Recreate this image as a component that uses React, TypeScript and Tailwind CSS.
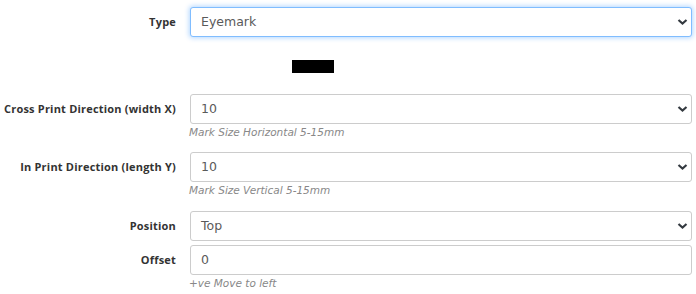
const Chevron = () => (
  <svg
    className="pointer-events-none absolute right-[3px] top-1/2 -translate-y-1/2"
    width="11"
    height="7"
    viewBox="0 0 11 7"
  >
    <path d="M1.5 1.5 L5.5 5 L9.5 1.5" fill="none" stroke="#343a40" strokeWidth="2.2" />
  </svg>
);

type FieldProps = {
  label: string;
  value: string;
  select?: boolean;
  focused?: boolean;
  help?: string;
  className?: string;
};

const Field = ({ label, value, select, focused, help, className }: FieldProps) => (
  <div className={className}>
    <div className="flex items-center">
      <label className="w-[176px] shrink-0 text-right text-[11px] font-bold tracking-[0.2px] text-[#333]">
        {label}
      </label>
      <div
        className={`relative ml-[14px] flex h-[30px] flex-1 items-center rounded-[3px] border bg-white pl-[10px] font-['DejaVu_Sans',sans-serif] text-[12.5px] text-[#5a5a5a] ${
          focused
            ? "border-[#80bdff] shadow-[0_0_5px_1px_rgba(0,123,255,0.3)]"
            : "border-[#ccc]"
        }`}
      >
        {value}
        {select && <Chevron />}
      </div>
    </div>
    {help && (
      <div className="ml-[189px] h-[16px] font-['DejaVu_Sans',sans-serif] text-[10.5px] leading-[16px] italic text-[#888]">
        {help}
      </div>
    )}
  </div>
);

const App = () => {
  return (
    <main className="w-[692px] bg-white pt-[7px] font-['Open_Sans',sans-serif]">
      <Field label="Type" value="Eyemark" select focused />
      <div className="ml-[292px] mt-[23px] h-[13px] w-[42px] bg-black" />
      <Field
        className="mt-[21px]"
        label="Cross Print Direction (width X)"
        value="10"
        select
        help="Mark Size Horizontal 5-15mm"
      />
      <Field
        className="mt-[12px]"
        label="In Print Direction (length Y)"
        value="10"
        select
        help="Mark Size Vertical 5-15mm"
      />
      <Field className="mt-[13px]" label="Position" value="Top" select />
      <Field className="mt-[4px]" label="Offset" value="0" help="+ve Move to left" />
    </main>
  );
};

export default App;
